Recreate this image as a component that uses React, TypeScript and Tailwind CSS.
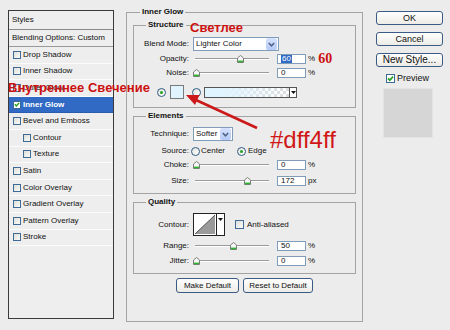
import React from "react";

const styles = [
  { name: "Drop Shadow" },
  { name: "Inner Shadow" },
  { name: "Outer Glow" },
  { name: "Inner Glow", on: true },
  { name: "Bevel and Emboss" },
  { name: "Contour", sub: true },
  { name: "Texture", sub: true },
  { name: "Satin" },
  { name: "Color Overlay" },
  { name: "Gradient Overlay" },
  { name: "Pattern Overlay" },
  { name: "Stroke" },
];

function Check({ on = false, small = false }: { on?: boolean; small?: boolean }) {
  return (
    <span
      className={`flex shrink-0 items-center justify-center border border-[#3e6a96] ${
        small ? "h-[8px] w-[8px]" : "h-[9px] w-[9px]"
      } ${on ? "bg-white" : "bg-[linear-gradient(135deg,#deded8,#fafaf8)]"}`}
    >
      {on && (
        <svg width="7" height="7" viewBox="0 0 7 7">
          <path d="M1 3.3 L2.8 5.2 L6 1.6" stroke="#21a121" strokeWidth="1.7" fill="none" />
        </svg>
      )}
    </span>
  );
}

function Radio({ on = false }: { on?: boolean }) {
  return (
    <span className="flex h-[9px] w-[9px] shrink-0 items-center justify-center rounded-full border border-[#2f5a85] bg-[linear-gradient(135deg,#e2e2dc,#ffffff)]">
      {on && <span className="h-[3px] w-[3px] rounded-full bg-[#21a121]" />}
    </span>
  );
}

function Slider({ v }: { v: number }) {
  return (
    <span className="relative ml-[6px] h-[10px] w-[74px] shrink-0">
      <span className="absolute left-0 right-0 top-[4px] h-[2px] border-t border-[#9a9a9a] bg-white" />
      <svg
        className="absolute top-[1px]"
        style={{ left: v * 74.7 - 2.5 }}
        width="7"
        height="8"
        viewBox="0 0 7 8"
      >
        <path d="M0.5 3 L3.5 0.5 L6.5 3 L6.5 7.5 L0.5 7.5 Z" fill="#f6f6f6" stroke="#7c7c7c" />
        <rect x="1" y="5.6" width="5" height="1.6" fill="#2db52d" />
      </svg>
    </span>
  );
}

function Field({ children }: { children: React.ReactNode }) {
  return (
    <span className="ml-[8px] flex h-[10px] w-[29px] shrink-0 items-center border border-[#7f9db9] bg-white pl-[3px]">
      {children}
    </span>
  );
}

function Select({ text, wide }: { text: string; wide?: boolean }) {
  return (
    <span
      className={`ml-[4px] flex h-[14px] shrink-0 items-center border border-[#7f9db9] bg-white pl-[2px] ${
        wide ? "w-[86px]" : "w-[40px]"
      }`}
    >
      <span className="flex-1">{text}</span>
      <span className="mr-px flex h-[12px] w-[11px] items-center justify-center rounded-[2px] bg-[linear-gradient(#d6e2fd,#b5c9f7)]">
        <svg width="7" height="5" viewBox="0 0 7 5">
          <path d="M0.8 1 L3.5 3.8 L6.2 1" stroke="#4d6185" strokeWidth="1.5" fill="none" />
        </svg>
      </span>
    </span>
  );
}

function Btn({ children, w }: { children: React.ReactNode; w: string }) {
  return (
    <div
      className={`flex shrink-0 items-center justify-center rounded-[3px] border border-[#3b5b84] bg-[linear-gradient(#ffffff,#ecebe6)] ${w}`}
    >
      {children}
    </div>
  );
}

function Label({ children }: { children: React.ReactNode }) {
  return <span className="w-[55px] shrink-0 text-right">{children}</span>;
}

export default function App() {
  return (
    <div className="relative flex h-[330px] w-[450px] items-start overflow-hidden bg-[#ececec] font-['Liberation_Sans',Arial,sans-serif] text-[8px] leading-none text-[#111]">
      {/* styles list */}
      <div className="ml-[8px] mt-[10px] h-[309px] w-[106px] shrink-0 border border-[#3a3a3a] bg-[#eeeeee]">
        <div className="flex h-[19px] items-center border-b border-[#8a8a8a] pl-[3px]">Styles</div>
        <div className="flex h-[17px] items-center border-b border-[#9a9a9a] pl-[3px]">
          Blending Options: Custom
        </div>
        {styles.map((s) => (
          <div
            key={s.name}
            className={`flex h-[16.6px] items-center gap-[2px] border-b ${
              s.on ? "border-[#2a5db0] bg-[#316ac5] font-bold text-white" : "border-[#fbfbfb]"
            } ${s.sub ? "pl-[14px]" : "pl-[4px]"}`}
          >
            <Check on={s.on} small />
            <span>{s.name}</span>
          </div>
        ))}
      </div>

      {/* Inner Glow group */}
      <fieldset className="ml-[12px] mt-[8px] h-[314px] w-[237px] shrink-0 border border-[#a3a3a3]">
        <legend className="ml-[13px] px-[2px] font-bold">Inner Glow</legend>
        <div className="px-[6px] pt-[5px]">
          <fieldset className="h-[87px] border border-[#a3a3a3]">
            <legend className="ml-[12px] px-[2px] font-bold">Structure</legend>
            <div className="mt-[8px] flex h-[14px] items-center">
              <Label>Blend Mode:</Label>
              <Select text="Lighter Color" wide />
            </div>
            <div className="mt-[3px] flex h-[10px] items-center">
              <Label>Opacity:</Label>
              <Slider v={0.6} />
              <Field>
                <span className="bg-[#316ac5] px-px text-white">60</span>
              </Field>
              <span className="ml-[2px]">%</span>
              <span className="ml-[3px] font-['Liberation_Serif',serif] text-[14px] font-bold text-[#cc1111]">60</span>
            </div>
            <div className="mt-[4px] flex h-[10px] items-center">
              <Label>Noise:</Label>
              <Slider v={0} />
              <Field>0</Field>
              <span className="ml-[2px]">%</span>
            </div>
            <div className="mt-[7px] flex h-[14px] items-center pl-[23px]">
              <Radio on />
              <span className="ml-[4px] h-[14px] w-[14px] border border-[#7a7a7a] bg-[#dff4ff]" />
              <span className="ml-[8px]">
                <Radio />
              </span>
              <span className="ml-[3px] flex h-[11px] w-[93px] border border-[#555] bg-[repeating-conic-gradient(#dcdcdc_0%_25%,#ffffff_0%_50%)] bg-[length:6px_6px]">
                <span className="flex-1 bg-[linear-gradient(to_right,#dff4ff_20%,rgba(223,244,255,0))]" />
                <span className="flex w-[7px] items-center justify-center border-l border-[#555] bg-white">
                  <svg width="5" height="3" viewBox="0 0 5 3">
                    <path d="M0 0 L5 0 L2.5 3 Z" fill="#111" />
                  </svg>
                </span>
              </span>
            </div>
          </fieldset>

          <fieldset className="mt-[4px] h-[82px] border border-[#a3a3a3]">
            <legend className="ml-[12px] px-[2px] font-bold">Elements</legend>
            <div className="mt-[7px] flex h-[14px] items-center">
              <Label>Technique:</Label>
              <Select text="Softer" />
            </div>
            <div className="mt-[5px] flex h-[10px] items-center">
              <Label>Source:</Label>
              <span className="ml-[2px] flex w-[46px] items-center">
                <Radio />
                <span className="ml-[1px]">Center</span>
              </span>
              <Radio on />
              <span className="ml-[2px]">Edge</span>
            </div>
            <div className="mt-[4px] flex h-[10px] items-center">
              <Label>Choke:</Label>
              <Slider v={0} />
              <Field>0</Field>
              <span className="ml-[2px]">%</span>
            </div>
            <div className="mt-[6px] flex h-[10px] items-center">
              <Label>Size:</Label>
              <Slider v={0.688} />
              <Field>172</Field>
              <span className="ml-[2px]">px</span>
            </div>
          </fieldset>

          <fieldset className="mt-[4px] h-[76px] border border-[#a3a3a3]">
            <legend className="ml-[12px] px-[2px] font-bold">Quality</legend>
            <div className="mt-[7px] flex h-[23px] items-center">
              <Label>Contour:</Label>
              <span className="ml-[4px] flex h-[23px] w-[32px] border border-[#222] bg-white">
                <svg width="22" height="21" viewBox="0 0 22 21">
                  <polygon points="1,20 21,1 21,20" fill="#9a9a9a" />
                  <line x1="1" y1="20" x2="21" y2="1" stroke="#555" strokeWidth="1" />
                </svg>
                <span className="flex w-[8px] justify-center border-l border-[#222] pt-[4px]">
                  <svg width="5" height="3" viewBox="0 0 5 3">
                    <path d="M0 0 L5 0 L2.5 3 Z" fill="#111" />
                  </svg>
                </span>
              </span>
              <span className="ml-[10px]">
                <Check />
              </span>
              <span className="ml-[3px]">Anti-aliased</span>
            </div>
            <div className="mt-[5px] flex h-[10px] items-center">
              <Label>Range:</Label>
              <Slider v={0.5} />
              <Field>50</Field>
              <span className="ml-[2px]">%</span>
            </div>
            <div className="mt-[5px] flex h-[10px] items-center">
              <Label>Jitter:</Label>
              <Slider v={0} />
              <Field>0</Field>
              <span className="ml-[2px]">%</span>
            </div>
          </fieldset>

          <div className="mt-[4px] flex justify-center gap-[4px]">
            <Btn w="h-[15px] w-[63px]">Make Default</Btn>
            <Btn w="h-[15px] w-[70px]">Reset to Default</Btn>
          </div>
        </div>
      </fieldset>

      {/* right column */}
      <div className="ml-[13px] mt-[11px] flex w-[67px] shrink-0 flex-col">
        <Btn w="h-[14px] w-[67px] text-[9px]">OK</Btn>
        <div className="mt-[7px]">
          <Btn w="h-[14px] w-[67px] text-[9px]">Cancel</Btn>
        </div>
        <div className="mt-[7px]">
          <Btn w="h-[14px] w-[67px] text-[10px]">New Style...</Btn>
        </div>
        <div className="ml-[10px] mt-[7px] flex h-[9px] items-center">
          <Check on />
          <span className="ml-[2px] text-[9px]">Preview</span>
        </div>
        <div className="ml-[7px] mt-[5px] h-[50px] w-[50px] border border-[#e4e4e4] bg-[#d6d6d6]" />
      </div>

      {/* red annotations */}
      <span className="absolute left-[8px] top-[81px] font-['Liberation_Sans',Arial,sans-serif] text-[13px] font-bold text-[#cc1111]">
        Внутреннее Свечение
      </span>
      <span className="absolute left-[190px] top-[21px] font-['Liberation_Sans',Arial,sans-serif] text-[13px] font-bold text-[#cc1111]">
        Светлее
      </span>
      <span className="absolute left-[270px] top-[128px] text-[24px] text-[#d01818]">#dff4ff</span>
      <svg className="pointer-events-none absolute left-0 top-0" width="450" height="330">
        <line x1="257" y1="128" x2="196" y2="100" stroke="#cc1a1a" strokeWidth="2.6" />
        <polygon points="186,95 199.5,95 195,105" fill="#cc1a1a" />
      </svg>
    </div>
  );
}
